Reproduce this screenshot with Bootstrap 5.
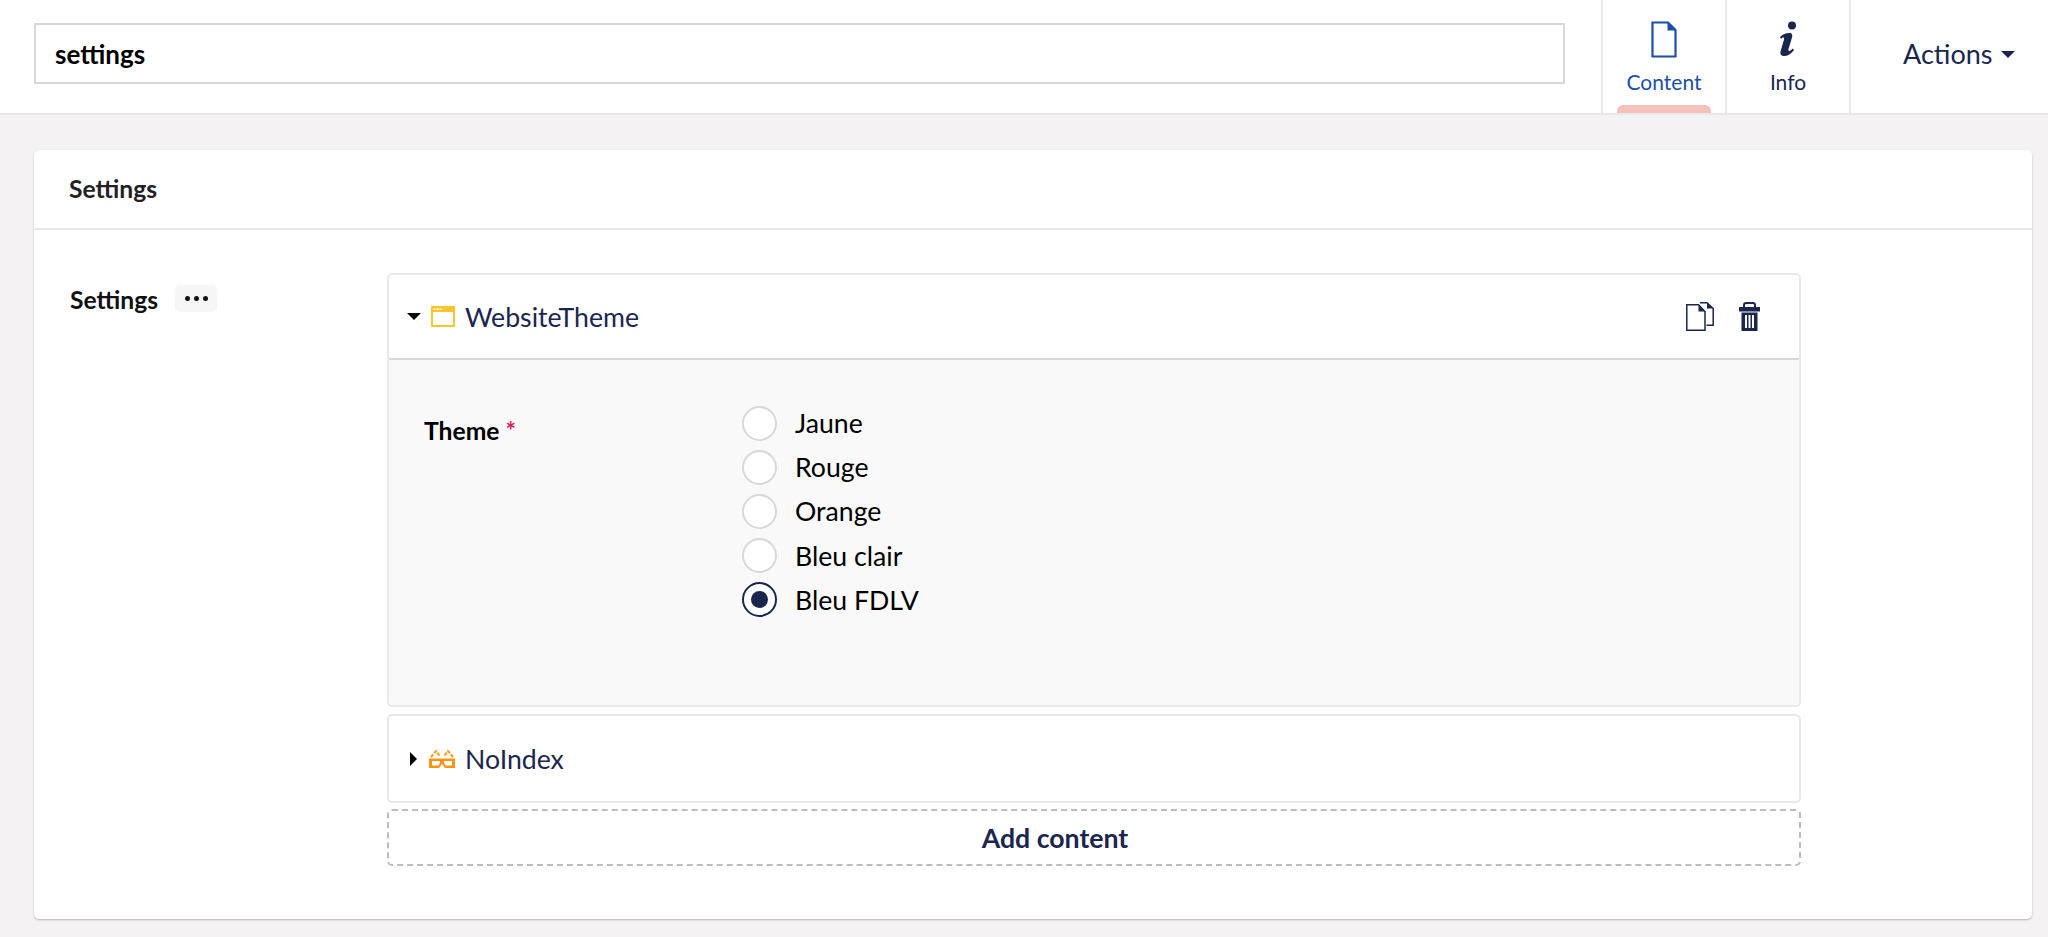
<!DOCTYPE html>
<html lang="en">
<head>
<meta charset="utf-8">
<title>settings</title>
<link href="https://cdn.jsdelivr.net/npm/bootstrap@5.3.0/dist/css/bootstrap.min.css" rel="stylesheet">
<style>
html,body{height:100%;}
body{font-family:Lato,"Liberation Sans",sans-serif;background:#f4f2f3;color:#1b264f;overflow:hidden;}
.top-bar{height:115px;background:#fff;border-bottom:2px solid #e9e9eb;}
.name-wrap{padding:23px 36px 0 34px;width:1601px;}
.name-box{height:61px;width:100%;border:2px solid #d8d7d9;padding:0 19px;font-size:26px;font-weight:700;color:#000;background:#fff;outline:0;}
.tab-item{width:124px;height:113px;border-left:2px solid #e9e9eb;padding-top:21px;font-size:21px;position:relative;color:#1b264f;}
.tab-item.is-on{color:#1b4fa8;}
.tab-item .tab-ico{height:37px;display:block;margin-bottom:8px;}
.tab-mark{position:absolute;left:14px;right:14px;bottom:0;height:8px;background:#f5c1bc;border-radius:6px 6px 0 0;}
.actions-cell{border-left:2px solid #e9e9eb;flex:1;height:113px;font-size:27px;padding-left:52px;padding-bottom:5px;}
.caret-d{display:inline-block;border-left:7px solid transparent;border-right:7px solid transparent;border-top:7px solid currentColor;}
.main-area{padding:35px 16px 0 34px;}
.set-card{background:#fff;border-radius:5px;box-shadow:0 1px 2px rgba(0,0,0,.25);height:769px;}
.set-head{height:80px;border-bottom:2px solid #e9e9eb;padding:0 35px 1px;font-size:24.67px;font-weight:700;color:#1f2125;}
.set-body{padding:43px 0 0 36px;}
.set-label{width:317px;font-size:24.67px;font-weight:700;color:#111;padding-top:12px;line-height:30px;}
.dots-btn{width:42px;height:27px;background:#f6f6f6;border-radius:5px;margin-left:17px;margin-top:-4px;}
.dots-btn i{width:5px;height:5px;border-radius:50%;background:#111;}
.blocks{width:1414px;}
.block-box{border:2px solid #e9e9eb;border-radius:5px;background:#fff;margin-bottom:7px;}
.block-head{height:85px;padding:0 39px 0 18px;font-size:26.67px;color:#1b264f;}
.block-head.open-one{height:85px;border-bottom:2px solid #d8d7d9;}
.caret-r{display:inline-block;border-top:7px solid transparent;border-bottom:7px solid transparent;border-left:7px solid #000;margin:0 12px 0 3px;}
.caret-open{border-left:7px solid transparent;border-right:7px solid transparent;border-top:7px solid #000;margin-right:10px;color:#000;}
.block-ico{margin-right:10px;}
.block-inner{background:#f9f9f9;height:345px;padding:41px 35px 0;border-radius:0 0 5px 5px;}
.theme-label{width:318px;font-size:24.67px;font-weight:700;color:#000;padding-top:15px;line-height:30px;}
.req{color:#e0195e;}
.radio-row{height:44.2px;font-size:26.67px;color:#000;}
.radio-dot{width:35px;height:35px;border-radius:50%;background:#fff;border:2px solid #d8d7d9;margin-right:18px;flex:none;}
.radio-dot.is-set{border-color:#1b264f;}
.radio-dot.is-set i{width:17px;height:17px;border-radius:50%;background:#1b264f;}
.add-btn{height:57px;border:2px dashed #bbbcc1;border-radius:5px;font-size:26.67px;font-weight:700;color:#1b264f;margin-top:-1px;padding-right:78px;}
.act-icons{gap:25px;}
</style>
</head>
<body>
<header class="top-bar d-flex">
  <div class="name-wrap"><input class="name-box d-block" type="text" value="settings" aria-label="Name"></div>
  <div class="tab-item is-on text-center">
    <svg class="tab-ico mx-auto" width="26" height="37" viewBox="0 0 26 37" aria-hidden="true"><path d="M1.500 1.500H17L24.500 9V35.500H1.500Z" fill="none" stroke="#1b4fa8" stroke-width="2.200"/><path d="M16.500 1.500V9.500H24.500Z" fill="#1b4fa8"/></svg>
    Content<span class="tab-mark"></span>
  </div>
  <div class="tab-item text-center">
    <svg class="tab-ico mx-auto" width="20" height="37" viewBox="0 0 20 37" aria-hidden="true"><circle cx="14" cy="4.500" r="4" fill="#1b264f"/><path d="M2 16C5 13 9 11.500 12.500 12C14.500 12.500 14.500 14.500 14 16.500L10.500 28C10 30 11 30.500 12.500 29.500L15 27.500L16 29C13 33 9 35.500 5 35C2.500 34.500 2 32.500 2.500 30.500L6 18.500C6.500 16.500 5.500 16 4 17L3 17.800Z" fill="#1b264f"/></svg>
    Info
  </div>
  <div class="actions-cell d-flex align-items-center">Actions<span class="caret-d ms-2"></span></div>
</header>
<main class="main-area">
  <section class="set-card">
    <div class="set-head d-flex align-items-center">Settings</div>
    <div class="set-body d-flex align-items-start">
      <div class="set-label d-flex align-items-center">Settings<span class="dots-btn d-inline-flex align-items-center justify-content-center gap-1"><i></i><i></i><i></i></span></div>
      <div class="blocks">
        <div class="block-box">
          <div class="block-head open-one d-flex align-items-center">
            <span class="caret-d caret-open"></span>
            <svg class="block-ico" width="24" height="21" viewBox="0 0 24 21" aria-hidden="true"><rect x="1" y="1" width="22" height="19" fill="#fff" stroke="#fec52d" stroke-width="2"/><rect x="1" y="1" width="22" height="5" fill="#fec52d"/><g fill="#fff"><rect x="2.500" y="2.500" width="2" height="1.500"/><rect x="5.500" y="2.500" width="2" height="1.500"/><rect x="8.500" y="2.500" width="2" height="1.500"/></g></svg>
            <span>WebsiteTheme</span>
            <span class="ms-auto d-flex align-items-center act-icons">
              <svg width="28" height="29" viewBox="0 0 28 29" aria-hidden="true"><path d="M.8 2.800H12.500L19 9.500V28.200H.8Z" fill="#fff" stroke="#1b264f" stroke-width="1.500"/><path d="M12.500 2.800V9.500H19Z" fill="#1b264f"/><path d="M14 .8H21L27.200 6.500V23.200H20.500" fill="none" stroke="#1b264f" stroke-width="1.500"/><path d="M21 .8V6.500H27.200Z" fill="#1b264f"/></svg>
              <svg width="21" height="29" viewBox="0 0 21 29" aria-hidden="true"><path d="M5 5V3Q5 1 7 1H14Q16 1 16 3V5" fill="none" stroke="#1b264f" stroke-width="2"/><path d="M0 5H21V9.500H0ZM2.500 10.500H18.500V29H2.500ZM6 13V26H8V13ZM9.500 13V26H11.500V13ZM13 13V26H15V13Z" fill="#1b264f" fill-rule="evenodd"/></svg>
            </span>
          </div>
          <div class="block-inner d-flex align-items-start">
            <div class="theme-label">Theme <span class="req">*</span></div>
            <div>
              <div class="radio-row d-flex align-items-center"><span class="radio-dot"></span>Jaune</div>
              <div class="radio-row d-flex align-items-center"><span class="radio-dot"></span>Rouge</div>
              <div class="radio-row d-flex align-items-center"><span class="radio-dot"></span>Orange</div>
              <div class="radio-row d-flex align-items-center"><span class="radio-dot"></span>Bleu clair</div>
              <div class="radio-row d-flex align-items-center"><span class="radio-dot is-set d-flex align-items-center justify-content-center"><i></i></span>Bleu FDLV</div>
            </div>
          </div>
        </div>
        <div class="block-box">
          <div class="block-head d-flex align-items-center">
            <span class="caret-r"></span>
            <svg class="block-ico" width="26" height="18" viewBox="0 0 26 18" aria-hidden="true"><path d="M0 8.500H26V18H16L13 14L10 18H0Z M3 11V15.500H9.500L11 13V11Z M15 11V13L16.500 15.500H23V11Z" fill="#ff9412" fill-rule="evenodd"/><path d="M2 7L7 1L10.500 5.500M24 7L19 1L15.500 5.500" fill="none" stroke="#ff9412" stroke-width="2" stroke-dasharray="3.500 1.500"/></svg>
            <span>NoIndex</span>
          </div>
        </div>
        <div class="add-btn d-flex align-items-center justify-content-center">Add content</div>
      </div>
    </div>
  </section>
</main>
</body>
</html>
